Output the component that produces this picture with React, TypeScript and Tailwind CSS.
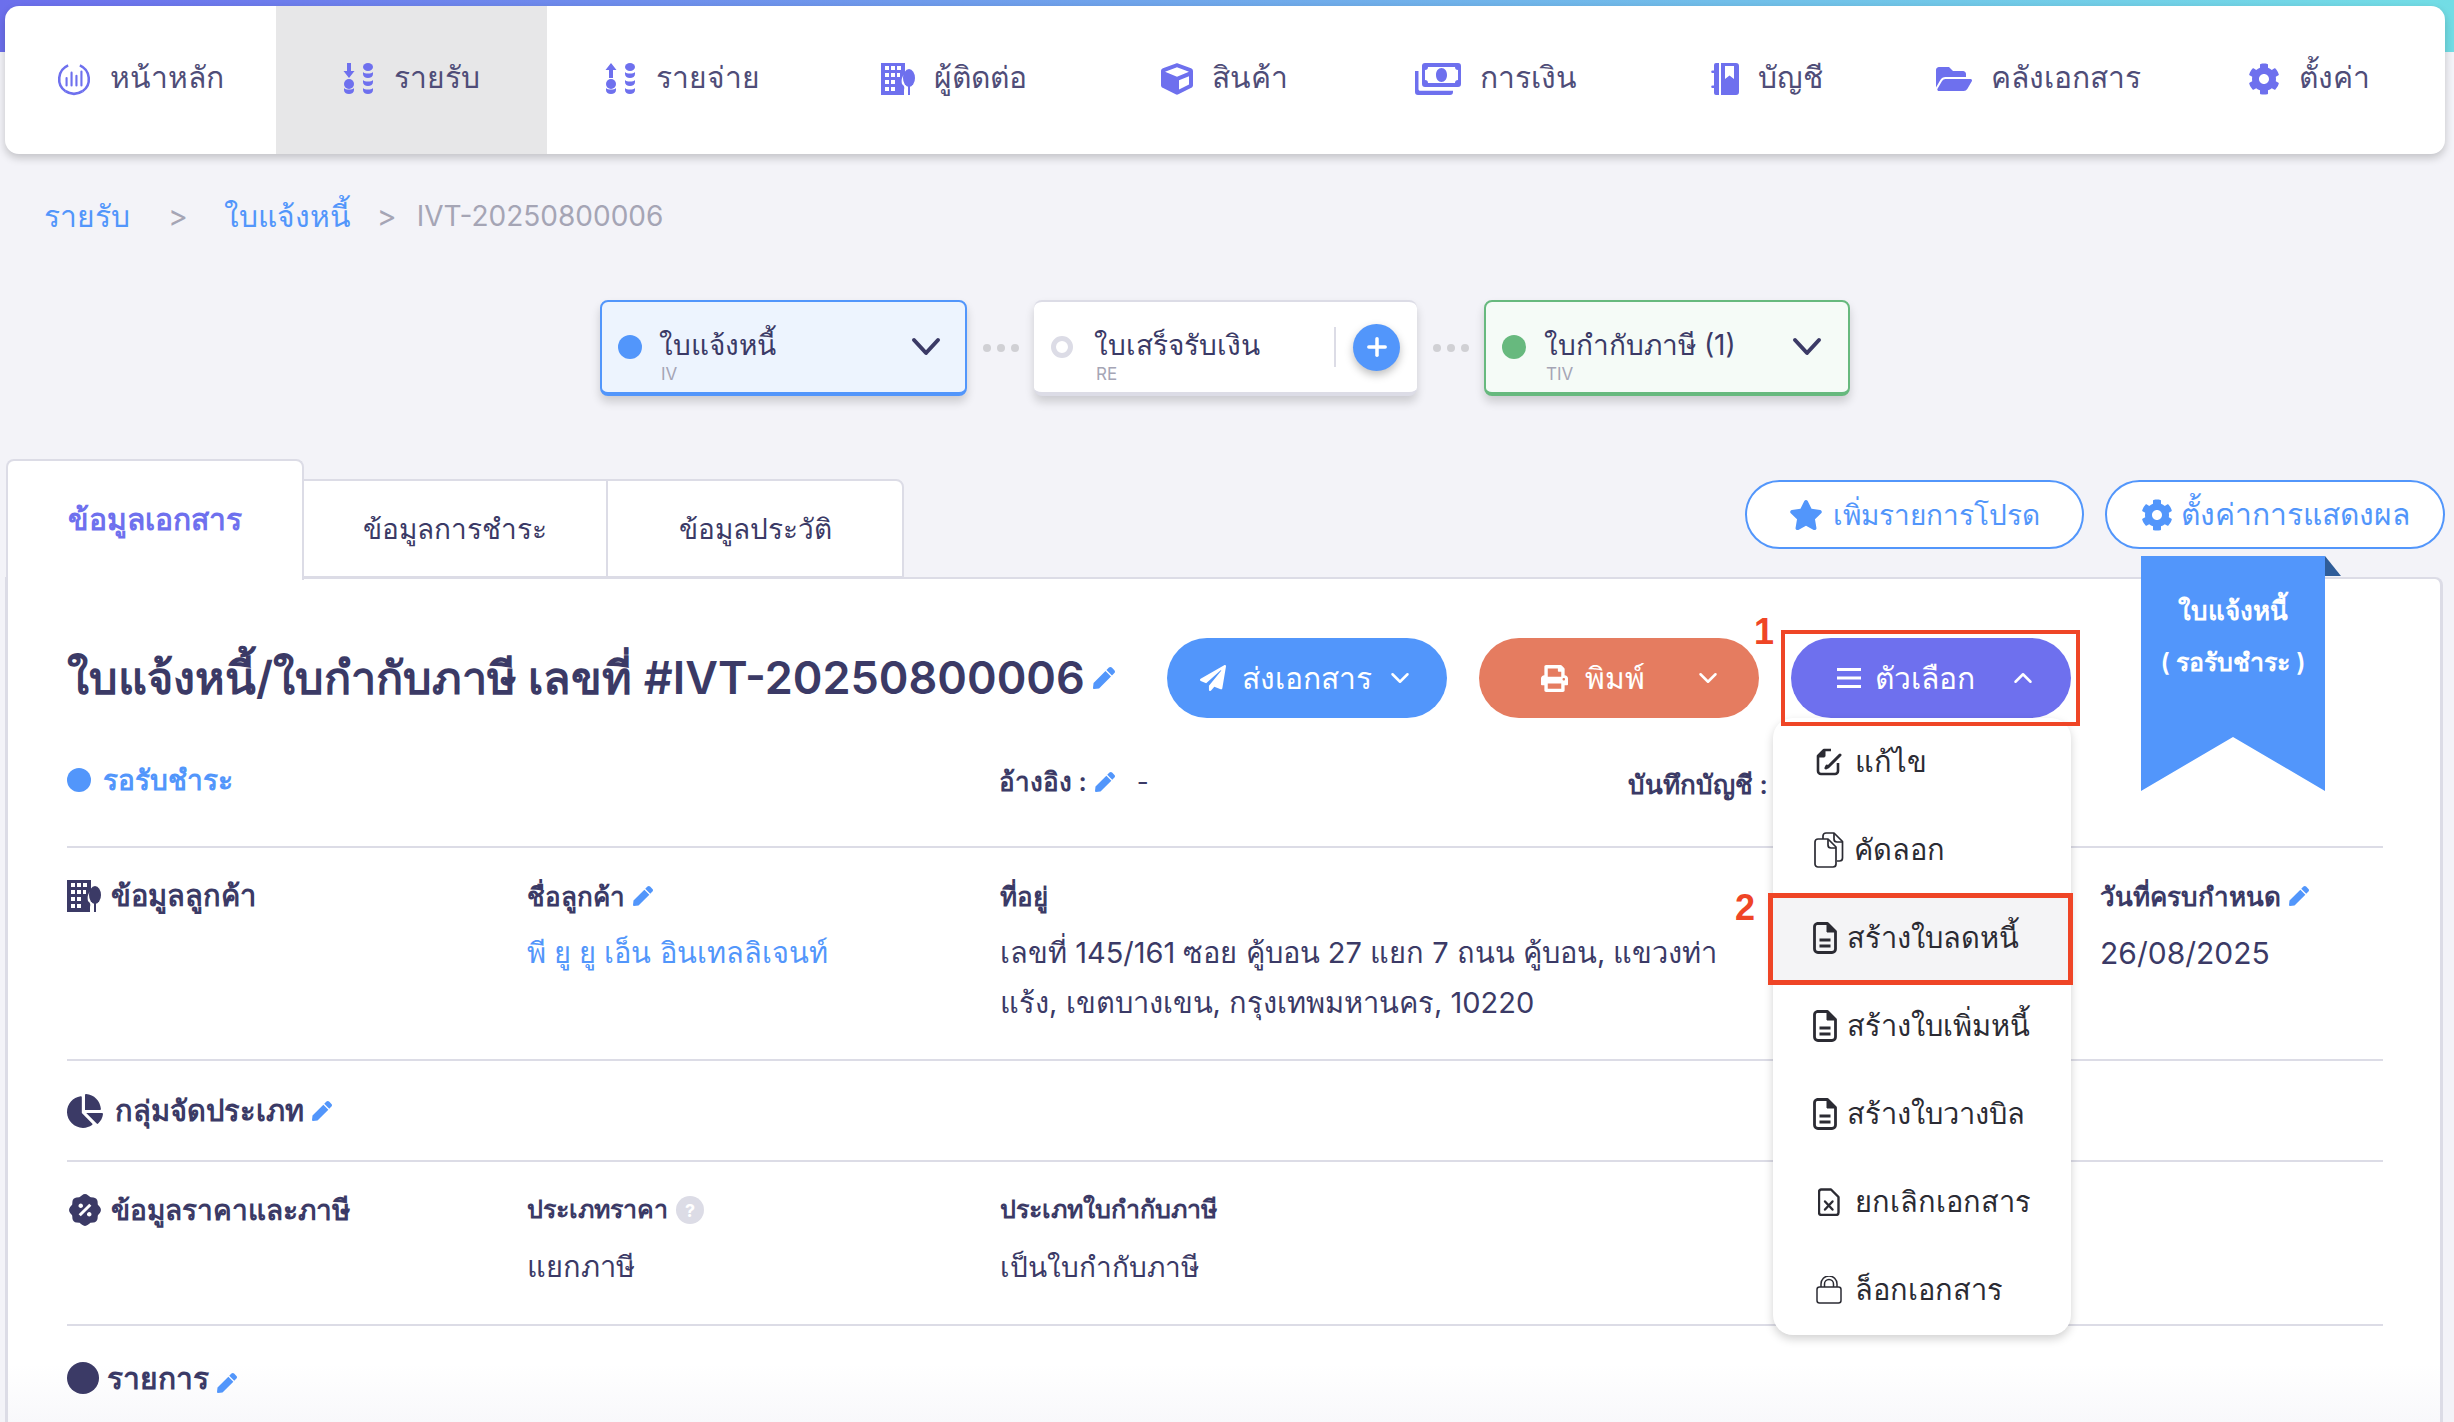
import React from "react";
import { FaCube, FaFolderOpen, FaCog, FaPen, FaStar, FaPaperPlane, FaPrint, FaChartPie } from "react-icons/fa";
import { RiDiscountPercentFill } from "react-icons/ri";
import { FiChevronDown, FiChevronUp, FiPlus } from "react-icons/fi";

const HomeIcon = () => (
  <svg width="34" height="34" viewBox="0 0 32 32" fill="none" stroke="#6e70ee">
    <path d="M10.5 3.2A14 14 0 0 0 8 27.5" strokeWidth="2.4" />
    <path d="M21.5 3.2A14 14 0 0 1 24 27.5" strokeWidth="2.4" />
    <path d="M8 27.5A14 14 0 0 0 24 27.5" strokeWidth="2.6" />
    <path d="M9 15v7M13.7 10v12M18.3 13v9M23 9v13" strokeWidth="2" strokeLinecap="round" />
  </svg>
);

const Crescent = ({ x, y }: { x: number; y: number }) => (
  <path d={`M${x - 5} ${y}c1.5 2 8.5 2 10 0v2c0 2.4-2.2 4-5 4s-5-1.6-5-4z`} />
);

const StackIcon = ({ up }: { up?: boolean }) => (
  <svg width="32" height="32" viewBox="0 0 32 32" fill="#6e70ee">
    {up ? <path d="M6 0l5.5 7H8v8H4V7H.5z" /> : <path d="M6 15L.5 8H4V0h4v8h3.5z" />}
    <circle cx="6" cy="21" r="5" />
    <Crescent x={6} y={25} />
    <ellipse cx="25" cy="4" rx="5" ry="4" />
    <Crescent x={25} y={9} />
    <Crescent x={25} y={17} />
    <Crescent x={25} y={25} />
  </svg>
);

const BuildingIcon = ({ color, w, h }: { color: string; w: number; h: number }) => (
  <svg width={w} height={h} viewBox="0 0 34 32" fill={color}>
    <path
      fillRule="evenodd"
      d="M0 0h24v11c-3 2-4 6-3 10l2 4v7H0zM4 3v4h4V3zm6 0v4h4V3zm6 0v4h4V3zM4 10v4h4v-4zm6 0v4h4v-4zm6 0v4h3v-4zM4 17v4h4v-4zm6 0v4h4v-4zM4 24v4h4v-4zm6 0v4h4v-4z"
    />
    <ellipse cx="28" cy="15" rx="6" ry="9" />
    <rect x="27" y="22" width="2" height="10" />
    <circle cx="19.5" cy="25" r="3.8" />
    <rect x="18.6" y="26" width="1.8" height="6" />
  </svg>
);

const MoneyIcon = () => (
  <svg width="46" height="32" viewBox="0 0 46 32" fill="#6e70ee">
    <path
      fillRule="evenodd"
      d="M10 0h33a3 3 0 0 1 3 3v18a3 3 0 0 1-3 3H10a3 3 0 0 1-3-3V3a3 3 0 0 1 3-3zm3 4a3 3 0 0 1-3 3v10a3 3 0 0 1 3 3h27a3 3 0 0 1 3-3V7a3 3 0 0 1-3-3zm13.500 1c3.300 0 5.500 3.200 5.500 7s-2.200 7-5.500 7-5.500-3.200-5.500-7 2.200-7 5.500-7z"
    />
    <path d="M0 8h3.500v18c0 1 .5 1.800 2 1.800H38V29a3 3 0 0 1-3 3H3a3 3 0 0 1-3-3z" />
  </svg>
);

const BookIcon = () => (
  <svg width="28" height="32" viewBox="0 0 28 32" fill="#6e70ee">
    <path d="M3 2a2 2 0 0 1 2-2h3v32H5a2 2 0 0 1-2-2v-5H1.500a1.300 1.300 0 0 1 0-2.600H3V10H1.500a1.300 1.300 0 0 1 0-2.600H3z" />
    <path
      fillRule="evenodd"
      d="M10 0h15a3 3 0 0 1 3 3v26a3 3 0 0 1-3 3H10zm4 3v13l4.500-3.500L23 16V3z"
    />
  </svg>
);

const ChainChevron = () => (
  <svg width="30" height="20" viewBox="0 0 30 20" fill="none" stroke="#3b3a66" strokeWidth="4" strokeLinecap="round" strokeLinejoin="round">
    <path d="M3 3l12 13L27 3" />
  </svg>
);

const EditDoc = () => (
  <svg width="28" height="28" viewBox="0 0 28 28" fill="none" stroke="#2b2b33" strokeWidth="2.6" strokeLinejoin="round">
    <path d="M15 2H8L2 8v15a3 3 0 0 0 3 3h14a3 3 0 0 0 3-3v-8" />
    <path d="M2 9h6a1 1 0 0 0 1-1V2" fill="#2b2b33" strokeWidth="1" />
    <path d="M11 18l-1 2 2-1L24 7" strokeWidth="3" strokeLinecap="round" />
  </svg>
);

const CopyDoc = () => (
  <svg width="30" height="36" viewBox="0 0 30 36" fill="none" stroke="#2b2b33" strokeWidth="1.700" strokeLinejoin="round">
    <path d="M9 7V4a3 3 0 0 1 3-3h8l8.500 8.500V26a3 3 0 0 1-3 3H23" />
    <path d="M20 1v6a3 3 0 0 0 3 3h5.500" />
    <path d="M4 7h10l8 8v17a3 3 0 0 1-3 3H4a3 3 0 0 1-3-3V10a3 3 0 0 1 3-3z" fill="#fff" />
    <path d="M14 7v6a3 3 0 0 0 3 3h5" />
  </svg>
);

const LinesDoc = () => (
  <svg width="24" height="32" viewBox="0 0 24 32" fill="none" stroke="#2b2b33" strokeWidth="2.800" strokeLinejoin="round">
    <path d="M4 1.500h10.500l8 8V27a3.500 3.500 0 0 1-3.500 3.500H5A3.500 3.500 0 0 1 1.500 27V5A3.500 3.500 0 0 1 4 1.500z" />
    <path d="M14 2v8h8" fill="#2b2b33" strokeWidth="1" />
    <path d="M6.500 18h11M6.500 24h11" />
  </svg>
);

const XDoc = () => (
  <svg width="22" height="28" viewBox="0 0 22 28" fill="none" stroke="#2b2b33" strokeWidth="2.400" strokeLinejoin="round">
    <path d="M3 1.500h10l7.500 7.500v15.500a2.500 2.500 0 0 1-2.500 2.500H3.500A2.500 2.500 0 0 1 1 24.500V4A2.500 2.500 0 0 1 3 1.500z" />
    <path d="M7 13.500l7.500 8M14.500 13.500l-7.500 8" strokeLinecap="round" />
  </svg>
);

const LockDoc = () => (
  <svg width="26" height="28" viewBox="0 0 26 28" fill="none" stroke="#2b2b33" strokeWidth="1.500" strokeLinejoin="round">
    <rect x="1" y="11" width="24" height="16" rx="2.500" />
    <path d="M5 11V8a8 8 0 0 1 16 0v3" />
    <path d="M8.500 11V8a4.500 4.500 0 0 1 9 0v3" />
  </svg>
);

const Pen = ({ s = 20 }: { s?: number }) => <FaPen size={s} color="#5296fb" className="inline-block shrink-0" />;

const navItems: [React.ReactNode, string][] = [
  [<HomeIcon />, "หน้าหลัก"],
  [<StackIcon />, "รายรับ"],
  [<StackIcon up />, "รายจ่าย"],
  [<BuildingIcon color="#6e70ee" w={34} h={32} />, "ผู้ติดต่อ"],
  [<FaCube size={32} color="#6e70ee" />, "สินค้า"],
  [<MoneyIcon />, "การเงิน"],
  [<BookIcon />, "บัญชี"],
  [<FaFolderOpen size={36} color="#6e70ee" />, "คลังเอกสาร"],
  [<FaCog size={32} color="#6e70ee" />, "ตั้งค่า"],
];

const menuItems: [React.ReactNode, string, string][] = [
  [<EditDoc />, "แก้ไข", "pl-[43px] gap-[11px]"],
  [<CopyDoc />, "คัดลอก", "pl-[41px] gap-[10px]"],
  [<LinesDoc />, "สร้างใบลดหนี้", "pl-[40px] gap-[10px]"],
  [<LinesDoc />, "สร้างใบเพิ่มหนี้", "pl-[40px] gap-[10px]"],
  [<LinesDoc />, "สร้างใบวางบิล", "pl-[40px] gap-[10px]"],
  [<XDoc />, "ยกเลิกเอกสาร", "pl-[45px] gap-[15px]"],
  [<LockDoc />, "ล็อกเอกสาร", "pl-[43px] gap-[13px]"],
];

const Dots = () => (
  <div className="flex w-[67px] items-center justify-center gap-[6px]">
    <span className="size-[8px] rounded-full bg-[#d0d0d4]" />
    <span className="size-[8px] rounded-full bg-[#d0d0d4]" />
    <span className="size-[8px] rounded-full bg-[#d0d0d4]" />
  </div>
);

const ChainText = ({ title, sub }: { title: string; sub: string }) => (
  <div className="flex flex-col pt-[16px]">
    <span className="text-[28px] leading-[38px] text-[#3b3a66]">{title}</span>
    <span className="ml-[2px] text-[17px] leading-[20px] text-[#a5a5b5]">{sub}</span>
  </div>
);

export default function App() {
  return (
    <div className="h-[1422px] w-[2454px] overflow-hidden bg-[#f3f3f8] font-['Inter','Noto_Sans',sans-serif] text-[#3b3a66]">
      <div className="h-[52px] bg-gradient-to-r from-[#6c6fec] to-[#72dde5]" />

      <nav className="relative mx-[5px] mt-[-46px] flex h-[148px] w-[2440px] overflow-hidden rounded-[14px] bg-white shadow-[0_4px_8px_rgba(0,0,0,0.2)]">
        {navItems.map(([icon, label], i) => (
          <div
            key={label}
            className={`flex flex-1 items-center justify-center gap-[19px] pb-[2px] text-[30px] text-[#4f4d78] ${i === 1 ? "bg-[#e7e7e8]" : ""}`}
          >
            {icon}
            <span className="pb-[4px]">{label}</span>
          </div>
        ))}
      </nav>

      <div className="ml-[44px] mt-[44px] flex h-[36px] items-center text-[30px] leading-[36px]">
        <span className="text-[#5296fb]">รายรับ</span>
        <span className="ml-[38px] text-[#a5a5b5]">&gt;</span>
        <span className="ml-[36px] text-[#5296fb]">ใบแจ้งหนี้</span>
        <span className="ml-[26px] text-[#a5a5b5]">&gt;</span>
        <span className="ml-[20px] text-[28px] text-[#a5a5b5]">IVT-20250800006</span>
      </div>

      <div className="ml-[600px] mt-[66px] flex h-[96px]">
        <div className="flex w-[367px] items-center rounded-[8px] border-2 border-b-[4px] border-[#5296fb] bg-[#edf4fe] pl-[16px] shadow-[0_6px_10px_rgba(0,0,0,0.16)]">
          <span className="size-[24px] shrink-0 rounded-full bg-[#5296fb]" />
          <div className="ml-[17px]">
            <ChainText title="ใบแจ้งหนี้" sub="IV" />
          </div>
          <div className="ml-auto mr-[24px]">
            <ChainChevron />
          </div>
        </div>
        <Dots />
        <div className="flex w-[383px] items-center rounded-[8px] border-t-[2px] border-b-[4px] border-[#dcdce6] bg-white pl-[17px] shadow-[0_6px_10px_rgba(0,0,0,0.16)]">
          <span className="size-[22px] shrink-0 rounded-full border-[5px] border-[#dcdce6] bg-white" />
          <div className="ml-[21px]">
            <ChainText title="ใบเสร็จรับเงิน" sub="RE" />
          </div>
          <span className="ml-auto h-[40px] w-[2px] bg-[#dcdce6]" />
          <span className="ml-[17px] mr-[17px] flex size-[47px] items-center justify-center rounded-full bg-[#5296fb] text-white shadow-[0_4px_8px_rgba(0,0,0,0.25)]">
            <FiPlus size={28} strokeWidth={3} />
          </span>
        </div>
        <Dots />
        <div className="flex w-[366px] items-center rounded-[8px] border-2 border-b-[4px] border-[#67b97e] bg-[#f5fbf7] pl-[16px] shadow-[0_6px_10px_rgba(0,0,0,0.16)]">
          <span className="size-[24px] shrink-0 rounded-full bg-[#67b97e]" />
          <div className="ml-[18px]">
            <ChainText title="ใบกำกับภาษี (1)" sub="TIV" />
          </div>
          <div className="ml-auto mr-[26px]">
            <ChainChevron />
          </div>
        </div>
      </div>

      <div className="relative z-10 ml-[6px] mr-[9px] mt-[63px] flex h-[118px] items-start">
        <div className="flex h-[121px] w-[298px] items-center justify-center rounded-t-[8px] border-x-2 border-t-2 border-[#dcdce6] bg-white pb-[2px] text-[30px] font-semibold text-[#6e70ee]">
          ข้อมูลเอกสาร
        </div>
        <div className="mt-[20px] flex h-[99px] w-[302px] items-center justify-center border-y-2 border-t-2 border-[#dcdce6] bg-white text-[28px]">
          ข้อมูลการชำระ
        </div>
        <div className="mt-[20px] flex h-[99px] w-[298px] items-center justify-center rounded-tr-[8px] border-2 border-[#dcdce6] bg-white text-[28px]">
          ข้อมูลประวัติ
        </div>
        <div className="ml-auto mt-[21px] flex gap-[21px]">
          <div className="flex h-[69px] w-[339px] items-center justify-center gap-[10px] rounded-full border-2 border-[#5296fb] bg-white text-[28px] text-[#5296fb]">
            <FaStar size={34} />
            เพิ่มรายการโปรด
          </div>
          <div className="flex h-[69px] w-[340px] items-center justify-center gap-[8px] rounded-full border-2 border-[#5296fb] bg-white text-[30px] text-[#5296fb]">
            <FaCog size={32} />
            ตั้งค่าการแสดงผล
          </div>
        </div>
      </div>

      <main className="relative ml-[5px] h-[846px] w-[2438px] rounded-tr-[8px] border-x-[3px] border-t-[2px] border-[#dcdce6] bg-gradient-to-b from-white from-[93%] to-[#f8f8fb] pl-[59px] pr-[57px] pt-[59px]">
        <div className="absolute left-[2133px] top-[-23px] flex h-[235px] w-[184px] flex-col items-center bg-[#5296fb] pt-[37px] text-white [clip-path:polygon(0_0,100%_0,100%_100%,50%_77%,0_100%)]">
          <span className="text-[26px] font-semibold leading-[36px]">ใบแจ้งหนี้</span>
          <span className="mt-[16px] text-[25px] font-semibold leading-[34px]">( รอรับชำระ )</span>
        </div>
        <div className="absolute left-[2317px] top-[-23px] h-[20px] w-[16px] bg-[#2f5d99] [clip-path:polygon(0_0,100%_100%,0_100%)]" />

        <div className="flex h-[80px] items-center">
          <div className="flex w-[1100px] items-center gap-[8px]">
            <h1 className="text-[45px] font-semibold leading-[60px] text-[#3b3a66]">ใบแจ้งหนี้/ใบกำกับภาษี เลขที่ #IVT-20250800006</h1>
            <Pen s={22} />
          </div>
          <div className="flex h-[80px] w-[280px] items-center justify-center gap-[16px] rounded-full bg-[#5296fb] text-[30px] text-white">
            <FaPaperPlane size={26} />
            <span>ส่งเอกสาร</span>
            <FiChevronDown size={30} className="-ml-[3px]" />
          </div>
          <div className="ml-[32px] flex h-[80px] w-[280px] items-center justify-center rounded-full bg-[#e57c60] pl-[26px] text-[30px] text-white">
            <FaPrint size={27} />
            <span className="ml-[17px]">พิมพ์</span>
            <FiChevronDown size={30} className="ml-[48px]" />
          </div>
          <div className="relative ml-[32px]">
            <span className="absolute left-[-37px] top-[-26px] font-['Liberation_Sans',sans-serif] text-[36px] font-bold leading-[40px] text-[#ef4526]">1</span>
            <div className="flex h-[80px] w-[280px] items-center justify-center rounded-full bg-[#6e70ee] pl-[12px] text-[30px] text-white">
              <svg width="24" height="20" viewBox="0 0 24 20" fill="#fff">
                <rect width="24" height="3" />
                <rect y="8.500" width="24" height="3" />
                <rect y="17" width="24" height="3" />
              </svg>
              <span className="ml-[14px]">ตัวเลือก</span>
              <FiChevronUp size={30} className="ml-[33px]" />
            </div>
            <div className="absolute -bottom-[8px] -left-[10px] -right-[9px] -top-[8px] z-30 border-[4px] border-[#ef4526]" />
            <div className="absolute left-[-18px] top-[80px] z-20 h-[617px] w-[298px] rounded-[20px] bg-white text-[29px] text-[#2b2b33] shadow-[0_4px_10px_rgba(0,0,0,0.18)]">
              {menuItems.map(([icon, label, cls], i) => (
                <div key={label} className={`relative flex h-[88px] items-center ${cls} ${i === 2 ? "bg-[#f4f4f6]" : ""}`}>
                  {icon}
                  <span>{label}</span>
                  {i === 2 && (
                    <>
                      <div className="absolute -bottom-[3px] -left-[5px] -right-[2px] -top-[1px] border-[5px] border-[#ef4526]" />
                      <span className="absolute left-[-38px] top-[-6px] font-['Liberation_Sans',sans-serif] text-[36px] font-bold leading-[40px] text-[#ef4526]">2</span>
                    </>
                  )}
                </div>
              ))}
            </div>
          </div>
        </div>

        <div className="flex h-[130px] items-start border-b-2 border-[#dcdce6] pt-[44px]">
          <div className="flex w-[932px] items-center gap-[12px]">
            <span className="size-[24px] rounded-full bg-[#5296fb]" />
            <span className="text-[28px] font-semibold leading-[36px] text-[#5296fb]">รอรับชำระ</span>
          </div>
          <div className="flex w-[629px] items-center gap-[8px] pt-[2px]">
            <span className="text-[26px] font-semibold leading-[36px]">อ้างอิง :</span>
            <Pen s={20} />
            <span className="ml-[14px] text-[26px] leading-[36px]">-</span>
          </div>
          <span className="pt-[5px] text-[26px] font-semibold leading-[36px]">บันทึกบัญชี :</span>
        </div>

        <div className="grid h-[213px] grid-cols-[460px_473px_1100px_283px] border-b-2 border-[#dcdce6] pt-[32px]">
          <div className="flex h-[32px] items-center gap-[10px]">
            <BuildingIcon color="#3b3a66" w={34} h={32} />
            <span className="text-[29px] font-semibold">ข้อมูลลูกค้า</span>
          </div>
          <div>
            <div className="flex h-[32px] items-center gap-[8px]">
              <span className="text-[26px] font-semibold">ชื่อลูกค้า</span>
              <Pen />
            </div>
            <div className="mt-[16px] text-[29px] leading-[50px] text-[#5296fb]">พี ยู ยู เอ็น อินเทลลิเจนท์</div>
          </div>
          <div>
            <div className="flex h-[32px] items-center text-[26px] font-semibold">ที่อยู่</div>
            <div className="mt-[16px] text-[29px] leading-[50px]">
              เลขที่ 145/161 ซอย คู้บอน 27 แยก 7 ถนน คู้บอน, แขวงท่า
              <br />
              แร้ง, เขตบางเขน, กรุงเทพมหานคร, 10220
            </div>
          </div>
          <div>
            <div className="flex h-[32px] items-center gap-[8px]">
              <span className="text-[26px] font-semibold">วันที่ครบกำหนด</span>
              <Pen />
            </div>
            <div className="mt-[16px] text-[30px] leading-[50px]">26/08/2025</div>
          </div>
        </div>

        <div className="flex h-[101px] items-center gap-[8px] border-b-2 border-[#dcdce6]">
          <FaChartPie size={36} color="#3b3a66" />
          <span className="ml-[4px] text-[29px] font-semibold">กลุ่มจัดประเภท</span>
          <Pen />
        </div>

        <div className="grid h-[164px] grid-cols-[460px_473px_1fr] border-b-2 border-[#dcdce6] pt-[32px]">
          <div className="flex h-[32px] items-center gap-[8px]">
            <RiDiscountPercentFill size={36} color="#3b3a66" />
            <span className="text-[28px] font-semibold">ข้อมูลราคาและภาษี</span>
          </div>
          <div>
            <div className="flex h-[32px] items-center gap-[8px]">
              <span className="text-[25px] font-semibold">ประเภทราคา</span>
              <span className="flex size-[28px] items-center justify-center rounded-full bg-[#dcdce6] text-[18px] font-bold text-white">?</span>
            </div>
            <div className="mt-[16px] text-[29px] leading-[50px]">แยกภาษี</div>
          </div>
          <div>
            <div className="flex h-[32px] items-center text-[25px] font-semibold">ประเภทใบกำกับภาษี</div>
            <div className="mt-[16px] text-[28px] leading-[50px]">เป็นใบกำกับภาษี</div>
          </div>
        </div>

        <div className="flex items-center gap-[8px] pt-[34px]">
          <span className="size-[32px] rounded-full bg-[#3b3a66]" />
          <span className="text-[30px] font-semibold leading-[36px]">รายการ</span>
          <div className="mt-[6px]">
            <Pen />
          </div>
        </div>
      </main>
    </div>
  );
}
